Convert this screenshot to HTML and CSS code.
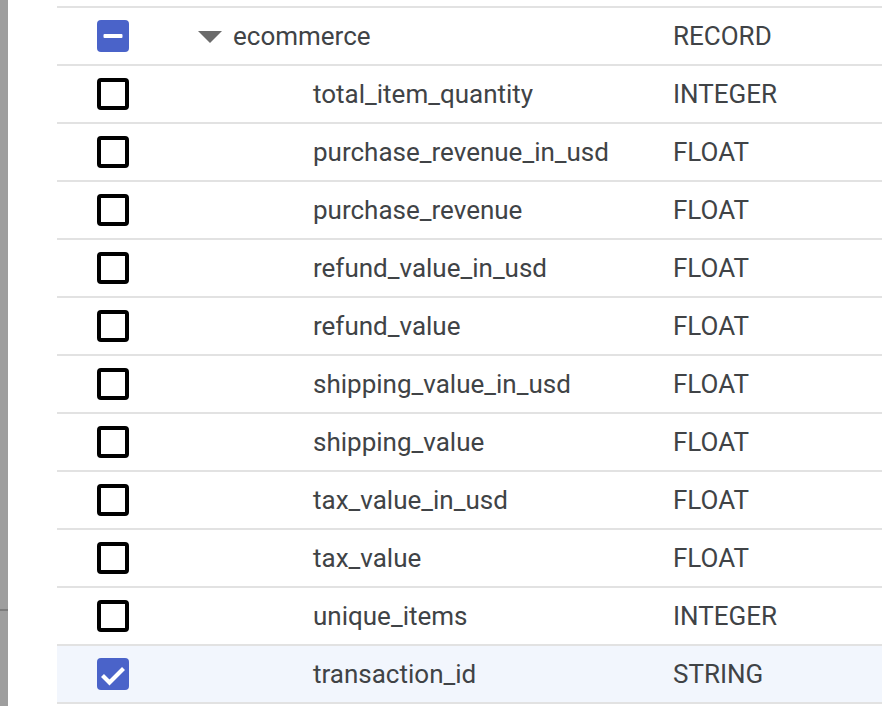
FILE: index.html
```html
<!DOCTYPE html>
<html>
<head>
<meta charset="utf-8">
<link rel="stylesheet" href="styles.css">
</head>
<body>
<div class="page">
  <div class="strip"><div class="strip-line"></div></div>
  <div class="content">
    <div class="table">
      <div class="row">
        <div class="cell-check"><span class="cb cb-on"><svg viewBox="0 0 32 32" width="32" height="32"><rect x="6.5" y="14" width="19" height="4" rx="1" fill="#fff"/></svg></span></div>
        <div class="cell-name parent"><span class="caret"></span>ecommerce</div>
        <div class="cell-type">RECORD</div>
      </div>
      <div class="row"><div class="cell-check"><span class="cb"></span></div><div class="cell-name child">total_item_quantity</div><div class="cell-type">INTEGER</div></div>
      <div class="row"><div class="cell-check"><span class="cb"></span></div><div class="cell-name child">purchase_revenue_in_usd</div><div class="cell-type">FLOAT</div></div>
      <div class="row"><div class="cell-check"><span class="cb"></span></div><div class="cell-name child">purchase_revenue</div><div class="cell-type">FLOAT</div></div>
      <div class="row"><div class="cell-check"><span class="cb"></span></div><div class="cell-name child">refund_value_in_usd</div><div class="cell-type">FLOAT</div></div>
      <div class="row"><div class="cell-check"><span class="cb"></span></div><div class="cell-name child">refund_value</div><div class="cell-type">FLOAT</div></div>
      <div class="row"><div class="cell-check"><span class="cb"></span></div><div class="cell-name child">shipping_value_in_usd</div><div class="cell-type">FLOAT</div></div>
      <div class="row"><div class="cell-check"><span class="cb"></span></div><div class="cell-name child">shipping_value</div><div class="cell-type">FLOAT</div></div>
      <div class="row"><div class="cell-check"><span class="cb"></span></div><div class="cell-name child">tax_value_in_usd</div><div class="cell-type">FLOAT</div></div>
      <div class="row"><div class="cell-check"><span class="cb"></span></div><div class="cell-name child">tax_value</div><div class="cell-type">FLOAT</div></div>
      <div class="row"><div class="cell-check"><span class="cb"></span></div><div class="cell-name child">unique_items</div><div class="cell-type">INTEGER</div></div>
      <div class="row selected">
        <div class="cell-check"><span class="cb cb-on"><svg viewBox="0 0 32 32" width="32" height="32"><path d="M5.5 17.5 L12.5 24.5 L26.5 10.5" fill="none" stroke="#fff" stroke-width="4.2"/></svg></span></div>
        <div class="cell-name child">transaction_id</div>
        <div class="cell-type">STRING</div>
      </div>
    </div>
  </div>
</div>
</body>
</html>
```

FILE: styles.css
```css
html, body {
  margin: 0;
  padding: 0;
  background: #ffffff;
  overflow: hidden;
}
.page {
  display: flex;
  width: 882px;
  height: 706px;
  font-family: Roboto, "Liberation Sans", sans-serif;
  font-size: 26px;
  color: #404346;
}
.strip {
  width: 8px;
  flex: none;
  background: #9e9e9e;
  display: flex;
  flex-direction: column;
  padding-top: 609px;
  box-sizing: border-box;
}
.strip-line {
  height: 2px;
  background: #7d7d7d;
}
.content {
  flex: 1;
  padding-left: 49px;
  padding-top: 6px;
  overflow: hidden;
}
.table {
  width: 900px;
  border-top: 2px solid #e2e2e2;
}
.row {
  display: flex;
  align-items: center;
  height: 56px;
  border-bottom: 2px solid #e2e2e2;
}
.row.selected {
  background: #f2f6fd;
}
.cell-check {
  width: 40px;
  padding-left: 40px;
  display: flex;
  align-items: center;
}
.cb {
  width: 32px;
  height: 32px;
  box-sizing: border-box;
  border: 4px solid #000000;
  border-radius: 4px;
  display: block;
}
.cb svg {
  display: block;
}
.cb-on {
  border: none;
  background: #4a63c9;
}
.cell-name {
  width: 536px;
  display: flex;
  align-items: center;
  box-sizing: border-box;
}
.cell-name.parent {
  padding-left: 61px;
}
.cell-name.child {
  padding-left: 176px;
}
.caret {
  width: 0;
  height: 0;
  border-left: 12px solid transparent;
  border-right: 12px solid transparent;
  border-top: 12px solid #6b6b6b;
  margin-right: 11px;
  margin-top: 2px;
}
.cell-type {
  flex: 1;
}
```
